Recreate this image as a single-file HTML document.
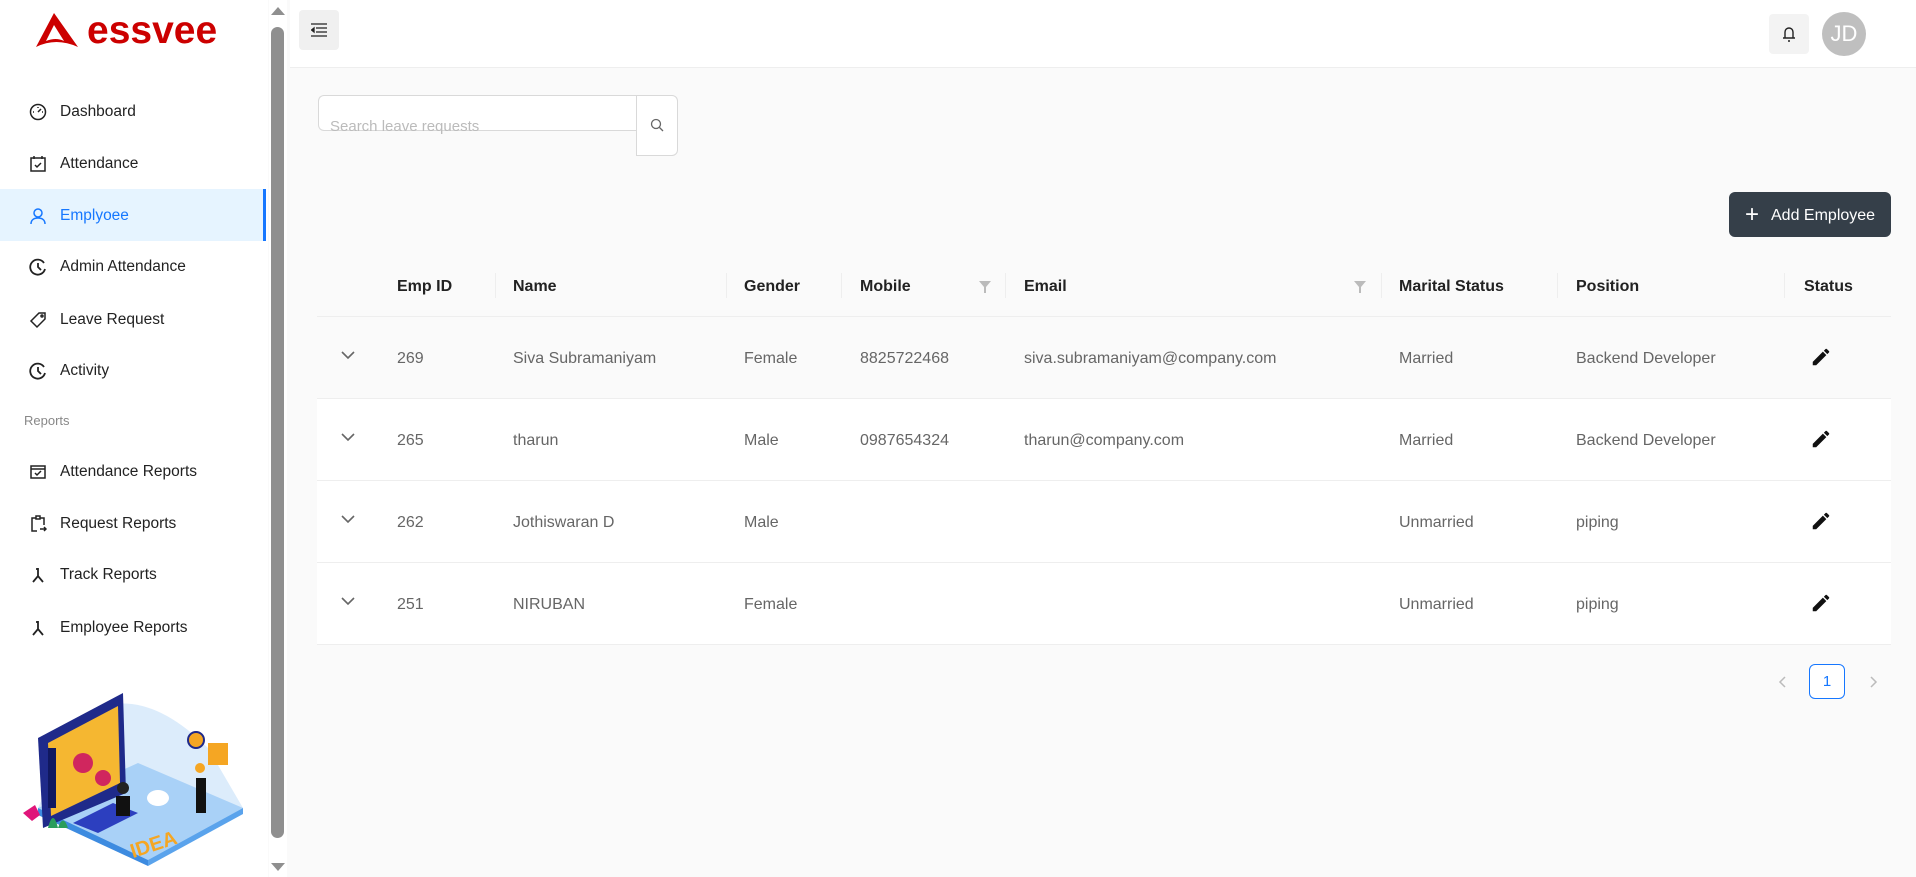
<!DOCTYPE html>
<html><head><meta charset="utf-8"><style>
*{box-sizing:border-box;margin:0;padding:0}
body{width:1916px;height:877px;overflow:hidden;font-family:"Liberation Sans",sans-serif;background:#fafafa;position:relative}
.sb{position:absolute;left:0;top:0;width:268px;height:877px;background:#fff}
.nav{position:absolute;left:0;width:266px;height:52px;display:flex;align-items:center;font-size:15.5px;color:#222}
.nav svg{position:absolute;left:29px;top:18px}
.nav span{position:absolute;left:60px;top:18px}
.nav.act{background:#e6f4ff;color:#1677ff;border-right:3px solid #1677ff}
.scroll{position:absolute;left:269px;top:0;width:18px;height:877px;background:#fff}
.thumb{position:absolute;left:271px;top:27px;width:13px;height:811px;background:#8f8f8f;border-radius:7px}
.hdr{position:absolute;left:290px;top:0;width:1626px;height:68px;background:#fff;border-bottom:1px solid #eee}
.abs{position:absolute}
.th{position:absolute;top:278px;font-size:16px;font-weight:bold;color:#222}
.sep{position:absolute;top:273px;width:1px;height:25px;background:#eee}
.row{position:absolute;left:317px;width:1574px;height:82px;border-bottom:1px solid #eee}
.td{position:absolute;font-size:16px;color:#666}
</style></head><body>
<div class="sb">
 <svg class="abs" style="left:32px;top:13px" width="48" height="36" viewBox="0 0 48 36"><path d="M22 0 L4 34 Q24 24 46 34 Z" fill="#c00"/><path d="M22 12 L14 28 Q24 24 32 28 Z" fill="#fff"/></svg>
 <div class="abs" style="left:87px;top:9px;font-size:39px;font-weight:bold;color:#c00;line-height:44px">essvee</div>
 <div class="nav" style="top:85px"><svg width="18" height="18" viewBox="0 0 18 18" fill="none" stroke="#222" stroke-width="1.5"><circle cx="9" cy="9" r="7.5"/><path d="M9 9l3-3M4 9h1M13 9h1M9 4v1"/></svg><span>Dashboard</span></div>
 <div class="nav" style="top:137px"><svg width="18" height="18" viewBox="0 0 18 18" fill="none" stroke="#222" stroke-width="1.5"><rect x="2" y="3" width="14" height="13"/><path d="M5 1v3M13 1v3M6 10l2 2 4-4"/></svg><span>Attendance</span></div>
 <div class="nav act" style="top:189px"><svg width="18" height="18" viewBox="0 0 18 18" fill="none" stroke="#1677ff" stroke-width="1.5"><circle cx="9" cy="6" r="4"/><path d="M2 17c0-4 3-6 7-6s7 2 7 6"/></svg><span>Emplyoee</span></div>
 <div class="nav" style="top:240px"><svg width="18" height="18" viewBox="0 0 18 18" fill="none" stroke="#222" stroke-width="1.8"><path d="M15 5A7.5 7.5 0 1 0 16 11"/><path d="M9 5v4l3 3"/></svg><span>Admin Attendance</span></div>
 <div class="nav" style="top:293px"><svg width="18" height="18" viewBox="0 0 18 18" fill="none" stroke="#222" stroke-width="1.5"><path d="M10 2h6v6l-8 8-6-6z"/><circle cx="13" cy="5" r="1"/></svg><span>Leave Request</span></div>
 <div class="nav" style="top:344px"><svg width="18" height="18" viewBox="0 0 18 18" fill="none" stroke="#222" stroke-width="1.8"><path d="M15 5A7.5 7.5 0 1 0 16 11"/><path d="M9 5v4l3 3"/></svg><span>Activity</span></div>
 <div class="abs" style="left:24px;top:413px;font-size:13px;color:#888">Reports</div>
 <div class="nav" style="top:445px"><svg width="18" height="18" viewBox="0 0 18 18" fill="none" stroke="#222" stroke-width="1.5"><rect x="2" y="3" width="14" height="12"/><path d="M2 6h14M6 10l2 2 4-4"/></svg><span>Attendance Reports</span></div>
 <div class="nav" style="top:497px"><svg width="18" height="18" viewBox="0 0 18 18" fill="none" stroke="#222" stroke-width="1.5"><path d="M7 3H3v13h5M11 3h4v7M7 1h4v3H7zM11 14h6M15 12l2 2-2 2"/></svg><span>Request Reports</span></div>
 <div class="nav" style="top:548px"><svg width="18" height="18" viewBox="0 0 18 18" fill="none" stroke="#222" stroke-width="1.8"><path d="M9 2v8M4 16l5-6 5 6M7 3h2"/></svg><span>Track Reports</span></div>
 <div class="nav" style="top:601px"><svg width="18" height="18" viewBox="0 0 18 18" fill="none" stroke="#222" stroke-width="1.8"><path d="M9 2v8M4 16l5-6 5 6M7 3h2"/></svg><span>Employee Reports</span></div>
 <svg class="abs" style="left:18px;top:688px" width="230" height="180" viewBox="0 0 230 180">
  <path d="M60 30 Q120 -10 190 60 L225 120 L130 175 L20 120 Z" fill="#dcecfb"/>
  <path d="M20 120 L120 75 L225 120 L130 172 Z" fill="#a9d1f7"/>
  <path d="M20 120 L130 172 L130 178 L20 127Z" fill="#3d8be0"/>
  <path d="M130 172 L225 120 L225 126 L130 178Z" fill="#5aa3ec"/>
  <path d="M20 50 L105 5 L108 105 L25 140 Z" fill="#1f2a8a"/>
  <path d="M30 55 L100 18 L102 95 L33 128 Z" fill="#f5b731"/>
  <rect x="30" y="60" width="8" height="60" fill="#101860"/>
  <circle cx="65" cy="75" r="10" fill="#d0265e"/>
  <circle cx="85" cy="90" r="8" fill="#d0265e"/>
  <path d="M5 125l12-8 5 10-8 6z" fill="#e0157a"/>
  <path d="M55 135 L95 115 L120 125 L80 145Z" fill="#2c3fbf"/>
  <circle cx="105" cy="100" r="6" fill="#222"/>
  <path d="M98 108 h14 v20 h-14z" fill="#111"/>
  <rect x="178" y="90" width="10" height="35" fill="#111"/>
  <circle cx="182" cy="80" r="5" fill="#f5a623"/>
  <path d="M190 55 h20 v22 h-20z" fill="#f5a623"/>
  <circle cx="178" cy="52" r="8" fill="#f5a623" stroke="#1f2a8a" stroke-width="2"/>
  <ellipse cx="140" cy="110" rx="11" ry="8" fill="#fff"/>
  <path d="M30 140 q5-20 10 0 q5-15 10 0z" fill="#2a9d5c"/>
  <text x="112" y="168" font-size="20" font-weight="bold" fill="#f5a623" transform="rotate(-18 120 160)">IDEA</text>
 </svg>
</div>
<div class="scroll"></div>
<div class="thumb"></div>
<svg class="abs" style="left:271px;top:6px" width="14" height="10"><path d="M0 9L7 1L14 9Z" fill="#8f8f8f"/></svg>
<svg class="abs" style="left:271px;top:862px" width="14" height="10"><path d="M0 1L7 9L14 1Z" fill="#8f8f8f"/></svg>

<div class="hdr"></div>
<div class="abs" style="left:299px;top:10px;width:40px;height:40px;background:#f0f0f0;border-radius:4px"><svg class="abs" style="left:12px;top:13px" width="16" height="14" viewBox="0 0 16 14" stroke="#222" stroke-width="1.3" fill="none"><path d="M0 1h16M5 5h11M5 9h11M0 13h16"/><path d="M3 5L0.5 7 3 9Z" fill="#222"/></svg></div>
<div class="abs" style="left:1769px;top:14px;width:40px;height:40px;background:#f3f3f3;border-radius:4px"><svg class="abs" style="left:13px;top:11px" width="14" height="18" viewBox="0 0 14 18" fill="none" stroke="#222" stroke-width="1.4"><path d="M3 13V7a4 4 0 0 1 8 0v6M1 13h12M6 16h2"/></svg></div>
<div class="abs" style="left:1822px;top:12px;width:44px;height:44px;border-radius:50%;background:#bfbfbf;color:#fff;font-size:22px;line-height:44px;text-align:center">JD</div>

<div class="abs" style="left:318px;top:95px;width:320px;height:36px;background:#fff;border:1px solid #d9d9d9;border-right:none;border-radius:6px 0 0 6px"></div>
<div class="abs" style="left:330px;top:118px;font-size:15px;color:#bbb">Search leave requests</div>
<div class="abs" style="left:636px;top:95px;width:42px;height:61px;background:#fff;border:1px solid #d9d9d9;border-radius:0 6px 6px 0"><svg class="abs" style="left:13px;top:22px" width="14" height="14" viewBox="0 0 14 14" fill="none" stroke="#666" stroke-width="1.3"><circle cx="6" cy="6" r="4.5"/><path d="M9.5 9.5L13 13"/></svg></div>

<div class="abs" style="left:1729px;top:192px;width:162px;height:45px;background:#353f49;border-radius:6px;color:#fff;font-size:16px;line-height:45px"><span style="position:absolute;left:16px;font-size:24px;font-weight:300">+</span><span style="position:absolute;left:42px;top:1px">Add Employee</span></div>

<div class="th" style="left:397px">Emp ID</div>
<div class="th" style="left:513px">Name</div>
<div class="th" style="left:744px">Gender</div>
<div class="th" style="left:860px">Mobile</div>
<div class="th" style="left:1024px">Email</div>
<div class="th" style="left:1399px">Marital Status</div>
<div class="th" style="left:1576px">Position</div>
<div class="th" style="left:1804px">Status</div>
<div class="sep" style="left:495px"></div><div class="sep" style="left:726px"></div><div class="sep" style="left:841px"></div><div class="sep" style="left:1005px"></div><div class="sep" style="left:1381px"></div><div class="sep" style="left:1557px"></div><div class="sep" style="left:1784px"></div>
<svg class="abs" style="left:979px;top:281px" width="12" height="12"><path d="M0 0h12L7 6v6H5V6Z" fill="#bbb"/></svg>
<svg class="abs" style="left:1354px;top:281px" width="12" height="12"><path d="M0 0h12L7 6v6H5V6Z" fill="#bbb"/></svg>
<div class="abs" style="left:317px;top:316px;width:1574px;height:1px;background:#eee"></div>

<div class="row" style="top:317px;background:#fafafa"></div>
<div class="row" style="top:399px;background:#fff"></div>
<div class="row" style="top:481px;background:#fff"></div>
<div class="row" style="top:563px;background:#fff"></div>

<div class="abs" style="top:350px;left:0;width:1916px">
 <svg class="abs" style="left:341px;top:1px" width="14" height="9"><path d="M1 1l6 6 6-6" fill="none" stroke="#666" stroke-width="1.6"/></svg>
 <div class="td" style="left:397px">269</div><div class="td" style="left:513px">Siva Subramaniyam</div><div class="td" style="left:744px">Female</div><div class="td" style="left:860px">8825722468</div><div class="td" style="left:1024px">siva.subramaniyam@company.com</div><div class="td" style="left:1399px">Married</div><div class="td" style="left:1576px">Backend Developer</div>
 <svg class="abs" style="left:1810px;top:-4px" width="22" height="22" viewBox="0 0 24 24"><path d="M3 17.25V21h3.75L17.81 9.94l-3.75-3.75L3 17.25zM20.71 7.04a1 1 0 0 0 0-1.41l-2.34-2.34a1 1 0 0 0-1.41 0l-1.83 1.83 3.75 3.75 1.83-1.83z" fill="#111"/></svg>
</div>
<div class="abs" style="top:432px;left:0;width:1916px">
 <svg class="abs" style="left:341px;top:1px" width="14" height="9"><path d="M1 1l6 6 6-6" fill="none" stroke="#666" stroke-width="1.6"/></svg>
 <div class="td" style="left:397px">265</div><div class="td" style="left:513px">tharun</div><div class="td" style="left:744px">Male</div><div class="td" style="left:860px">0987654324</div><div class="td" style="left:1024px">tharun@company.com</div><div class="td" style="left:1399px">Married</div><div class="td" style="left:1576px">Backend Developer</div>
 <svg class="abs" style="left:1810px;top:-4px" width="22" height="22" viewBox="0 0 24 24"><path d="M3 17.25V21h3.75L17.81 9.94l-3.75-3.75L3 17.25zM20.71 7.04a1 1 0 0 0 0-1.41l-2.34-2.34a1 1 0 0 0-1.41 0l-1.83 1.83 3.75 3.75 1.83-1.83z" fill="#111"/></svg>
</div>
<div class="abs" style="top:514px;left:0;width:1916px">
 <svg class="abs" style="left:341px;top:1px" width="14" height="9"><path d="M1 1l6 6 6-6" fill="none" stroke="#666" stroke-width="1.6"/></svg>
 <div class="td" style="left:397px">262</div><div class="td" style="left:513px">Jothiswaran D</div><div class="td" style="left:744px">Male</div><div class="td" style="left:1399px">Unmarried</div><div class="td" style="left:1576px">piping</div>
 <svg class="abs" style="left:1810px;top:-4px" width="22" height="22" viewBox="0 0 24 24"><path d="M3 17.25V21h3.75L17.81 9.94l-3.75-3.75L3 17.25zM20.71 7.04a1 1 0 0 0 0-1.41l-2.34-2.34a1 1 0 0 0-1.41 0l-1.83 1.83 3.75 3.75 1.83-1.83z" fill="#111"/></svg>
</div>
<div class="abs" style="top:596px;left:0;width:1916px">
 <svg class="abs" style="left:341px;top:1px" width="14" height="9"><path d="M1 1l6 6 6-6" fill="none" stroke="#666" stroke-width="1.6"/></svg>
 <div class="td" style="left:397px">251</div><div class="td" style="left:513px">NIRUBAN</div><div class="td" style="left:744px">Female</div><div class="td" style="left:1399px">Unmarried</div><div class="td" style="left:1576px">piping</div>
 <svg class="abs" style="left:1810px;top:-4px" width="22" height="22" viewBox="0 0 24 24"><path d="M3 17.25V21h3.75L17.81 9.94l-3.75-3.75L3 17.25zM20.71 7.04a1 1 0 0 0 0-1.41l-2.34-2.34a1 1 0 0 0-1.41 0l-1.83 1.83 3.75 3.75 1.83-1.83z" fill="#111"/></svg>
</div>

<svg class="abs" style="left:1778px;top:675px" width="10" height="14"><path d="M7 2L2 7l5 5" fill="none" stroke="#bbb" stroke-width="1.5"/></svg>
<div class="abs" style="left:1809px;top:664px;width:36px;height:35px;border:1px solid #1677ff;border-radius:6px;background:#fff;color:#1677ff;font-size:15px;text-align:center;line-height:33px">1</div>
<svg class="abs" style="left:1868px;top:675px" width="10" height="14"><path d="M3 2l5 5-5 5" fill="none" stroke="#bbb" stroke-width="1.5"/></svg>
</body></html>
